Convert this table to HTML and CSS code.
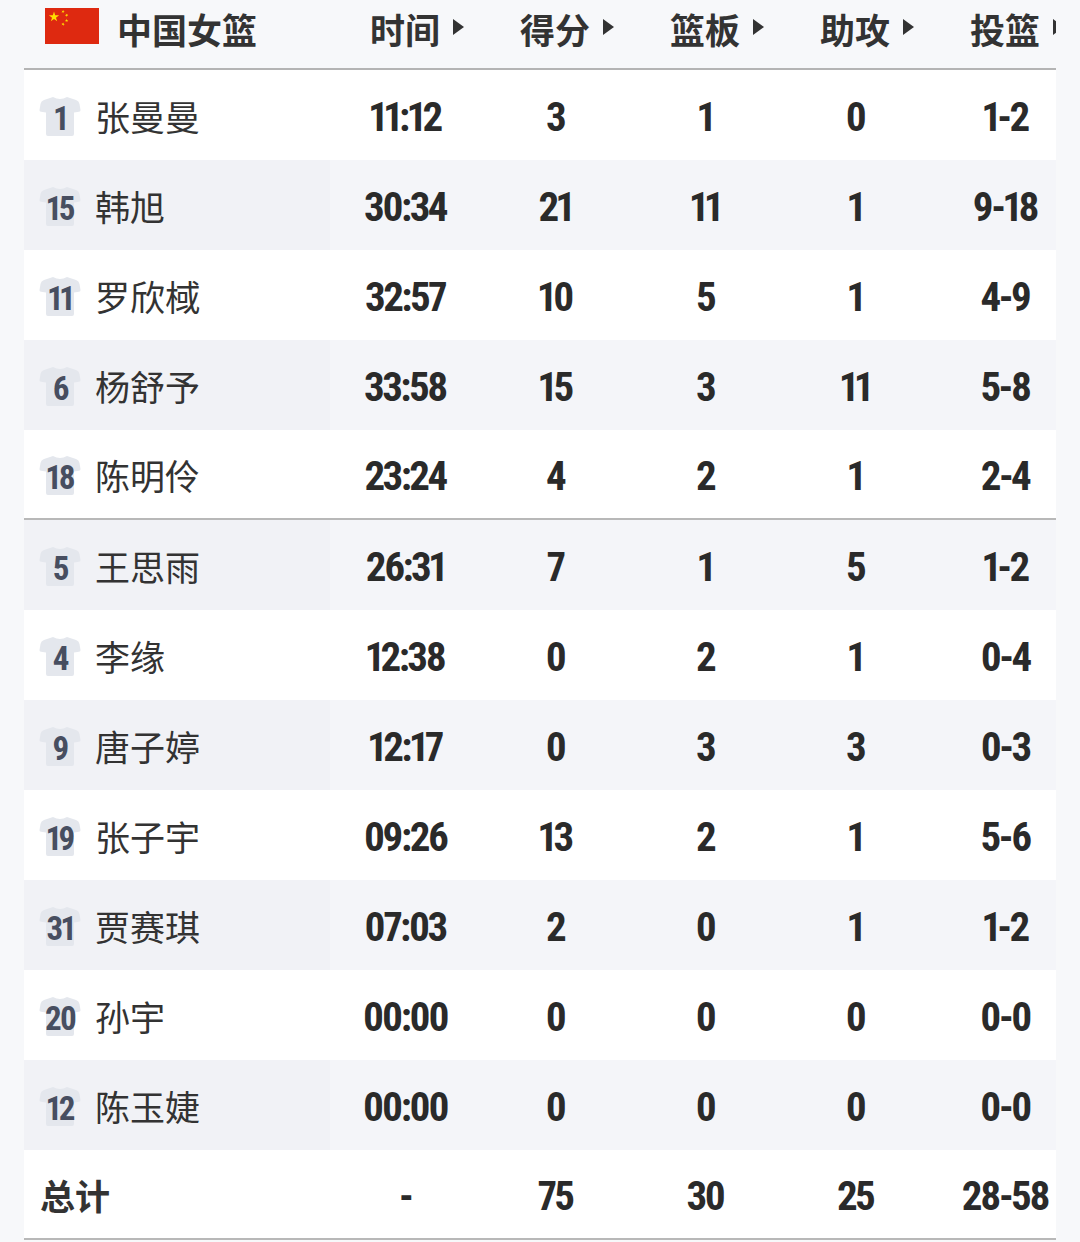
FILE: index.html
```html
<!DOCTYPE html>
<html lang="zh-CN">
<head>
<meta charset="utf-8">
<title>中国女篮 数据</title>
<link rel="stylesheet" href="styles.css">
</head>
<body>
<svg width="0" height="0" class="defs" aria-hidden="true">
  <defs>
    <path id="star" d="M0,-1L0.2245,-0.309L0.951,-0.309L0.363,0.118L0.588,0.809L0,0.382L-0.588,0.809L-0.363,0.118L-0.951,-0.309L-0.2245,-0.309Z"/>
    <path id="shirt" d="M14 1 L5 4 Q2 5 1.5 8 L0.5 14 Q0.3 15.5 2 15.8 L7 16.5 L7 38 Q7 40 9 40 L33 40 Q35 40 35 38 L35 16.5 L40 15.8 Q41.7 15.5 41.5 14 L40.5 8 Q40 5 37 4 L28 1 Q21 5 14 1 Z"/>
  </defs>
</svg>
<div class="board">
  <div class="row head">
    <div class="first team">
      <svg class="flag" viewBox="0 0 30 20" width="54" height="36">
        <rect width="30" height="20" fill="#de2910"/>
        <use href="#star" fill="#ffde00" transform="translate(5,5) scale(3)"/>
        <use href="#star" fill="#ffde00" transform="translate(10,2) rotate(23) scale(1)"/>
        <use href="#star" fill="#ffde00" transform="translate(12,4) rotate(46) scale(1)"/>
        <use href="#star" fill="#ffde00" transform="translate(12,7) rotate(70) scale(1)"/>
        <use href="#star" fill="#ffde00" transform="translate(10,9) rotate(21) scale(1)"/>
      </svg>
      <span class="team-name">中国女篮</span>
    </div>
    <div class="cell label">时间</div>
    <div class="cell label">得分</div>
    <div class="cell label">篮板</div>
    <div class="cell label">助攻</div>
    <div class="cell label">投篮</div>
  </div>

  <div class="row">
    <div class="first"><span class="jersey"><svg viewBox="0 0 42 40"><use href="#shirt"/></svg><b>1</b></span><span class="name">张曼曼</span></div>
    <div class="cell num">11:12</div><div class="cell num">3</div><div class="cell num">1</div><div class="cell num">0</div><div class="cell num">1-2</div>
  </div>
  <div class="row alt">
    <div class="first"><span class="jersey"><svg viewBox="0 0 42 40"><use href="#shirt"/></svg><b>15</b></span><span class="name">韩旭</span></div>
    <div class="cell num">30:34</div><div class="cell num">21</div><div class="cell num">11</div><div class="cell num">1</div><div class="cell num">9-18</div>
  </div>
  <div class="row">
    <div class="first"><span class="jersey"><svg viewBox="0 0 42 40"><use href="#shirt"/></svg><b>11</b></span><span class="name">罗欣棫</span></div>
    <div class="cell num">32:57</div><div class="cell num">10</div><div class="cell num">5</div><div class="cell num">1</div><div class="cell num">4-9</div>
  </div>
  <div class="row alt">
    <div class="first"><span class="jersey"><svg viewBox="0 0 42 40"><use href="#shirt"/></svg><b>6</b></span><span class="name">杨舒予</span></div>
    <div class="cell num">33:58</div><div class="cell num">15</div><div class="cell num">3</div><div class="cell num">11</div><div class="cell num">5-8</div>
  </div>
  <div class="row split">
    <div class="first"><span class="jersey"><svg viewBox="0 0 42 40"><use href="#shirt"/></svg><b>18</b></span><span class="name">陈明伶</span></div>
    <div class="cell num">23:24</div><div class="cell num">4</div><div class="cell num">2</div><div class="cell num">1</div><div class="cell num">2-4</div>
  </div>
  <div class="row alt">
    <div class="first"><span class="jersey"><svg viewBox="0 0 42 40"><use href="#shirt"/></svg><b>5</b></span><span class="name">王思雨</span></div>
    <div class="cell num">26:31</div><div class="cell num">7</div><div class="cell num">1</div><div class="cell num">5</div><div class="cell num">1-2</div>
  </div>
  <div class="row">
    <div class="first"><span class="jersey"><svg viewBox="0 0 42 40"><use href="#shirt"/></svg><b>4</b></span><span class="name">李缘</span></div>
    <div class="cell num">12:38</div><div class="cell num">0</div><div class="cell num">2</div><div class="cell num">1</div><div class="cell num">0-4</div>
  </div>
  <div class="row alt">
    <div class="first"><span class="jersey"><svg viewBox="0 0 42 40"><use href="#shirt"/></svg><b>9</b></span><span class="name">唐子婷</span></div>
    <div class="cell num">12:17</div><div class="cell num">0</div><div class="cell num">3</div><div class="cell num">3</div><div class="cell num">0-3</div>
  </div>
  <div class="row">
    <div class="first"><span class="jersey"><svg viewBox="0 0 42 40"><use href="#shirt"/></svg><b>19</b></span><span class="name">张子宇</span></div>
    <div class="cell num">09:26</div><div class="cell num">13</div><div class="cell num">2</div><div class="cell num">1</div><div class="cell num">5-6</div>
  </div>
  <div class="row alt">
    <div class="first"><span class="jersey"><svg viewBox="0 0 42 40"><use href="#shirt"/></svg><b>31</b></span><span class="name">贾赛琪</span></div>
    <div class="cell num">07:03</div><div class="cell num">2</div><div class="cell num">0</div><div class="cell num">1</div><div class="cell num">1-2</div>
  </div>
  <div class="row">
    <div class="first"><span class="jersey"><svg viewBox="0 0 42 40"><use href="#shirt"/></svg><b>20</b></span><span class="name">孙宇</span></div>
    <div class="cell num">00:00</div><div class="cell num">0</div><div class="cell num">0</div><div class="cell num">0</div><div class="cell num">0-0</div>
  </div>
  <div class="row alt">
    <div class="first"><span class="jersey"><svg viewBox="0 0 42 40"><use href="#shirt"/></svg><b>12</b></span><span class="name">陈玉婕</span></div>
    <div class="cell num">00:00</div><div class="cell num">0</div><div class="cell num">0</div><div class="cell num">0</div><div class="cell num">0-0</div>
  </div>

  <div class="row total">
    <div class="first"><span class="total-label">总计</span></div>
    <div class="cell num">-</div><div class="cell num">75</div><div class="cell num">30</div><div class="cell num">25</div><div class="cell num">28-58</div>
  </div>
</div>
</body>
</html>
```
FILE: styles.css
```css
html, body {
  margin: 0;
  padding: 0;
  background: #f7f8fa;
}
body {
  font-family: "Noto Sans CJK SC", "Noto Sans", sans-serif;
  color: #333;
}
.defs {
  position: absolute;
  width: 0;
  height: 0;
}
.board {
  width: 1032px;
  margin-left: 24px;
  overflow: hidden;
}
.row {
  display: grid;
  grid-template-columns: 306px repeat(5, 150px);
  width: 1056px;
  height: 90px;
  box-sizing: border-box;
  background: #fff;
}
.row.alt .cell {
  background: #f4f5f9;
}
.row.alt .first {
  background: #f1f2f6;
}
.row.split,
.row.total {
  border-bottom: 2px solid #b8b8b8;
}
.head {
  height: 70px;
  background: transparent;
  border-bottom: 2px solid #b4b4b4;
  padding-bottom: 12px;
}
.first {
  display: flex;
  align-items: center;
  padding-left: 14px;
  gap: 14px;
}
.team {
  padding-left: 21px;
  gap: 18px;
}
.flag {
  display: block;
  margin-bottom: 4px;
}
.team-name,
.label,
.total-label {
  font-size: 35px;
  font-weight: 700;
  color: #333;
}
.cell {
  display: flex;
  align-items: center;
  justify-content: center;
}
.label {
  padding-left: 24px;
}
.label::after {
  content: "";
  display: block;
  margin-left: 13px;
  margin-bottom: 3px;
  border-left: 11px solid #333;
  border-top: 8.5px solid transparent;
  border-bottom: 8.5px solid transparent;
}
.num {
  font-family: Roboto, "Liberation Sans", sans-serif;
  font-stretch: 75%;
  font-weight: 700;
  font-size: 41px;
  font-variant-numeric: proportional-nums;
  letter-spacing: -2.6px;
  color: #2a2a2a;
  padding-top: 4px;
}
.jersey {
  display: grid;
  width: 42px;
  height: 40px;
  margin-left: 1px;
  margin-top: 2px;
}
.jersey svg {
  grid-area: 1 / 1;
  width: 42px;
  height: 40px;
  fill: #e4e7ed;
}
.jersey b {
  grid-area: 1 / 1;
  align-self: center;
  justify-self: center;
  font-family: Roboto, "Liberation Sans", sans-serif;
  font-stretch: 75%;
  font-weight: 700;
  font-size: 33px;
  font-variant-numeric: proportional-nums;
  letter-spacing: -2px;
  color: #474e60;
  margin-top: 4px;
  line-height: 1;
}
.name {
  font-size: 35px;
  font-weight: 400;
  color: #333;
}
.total .first {
  padding-left: 16px;
}
```
